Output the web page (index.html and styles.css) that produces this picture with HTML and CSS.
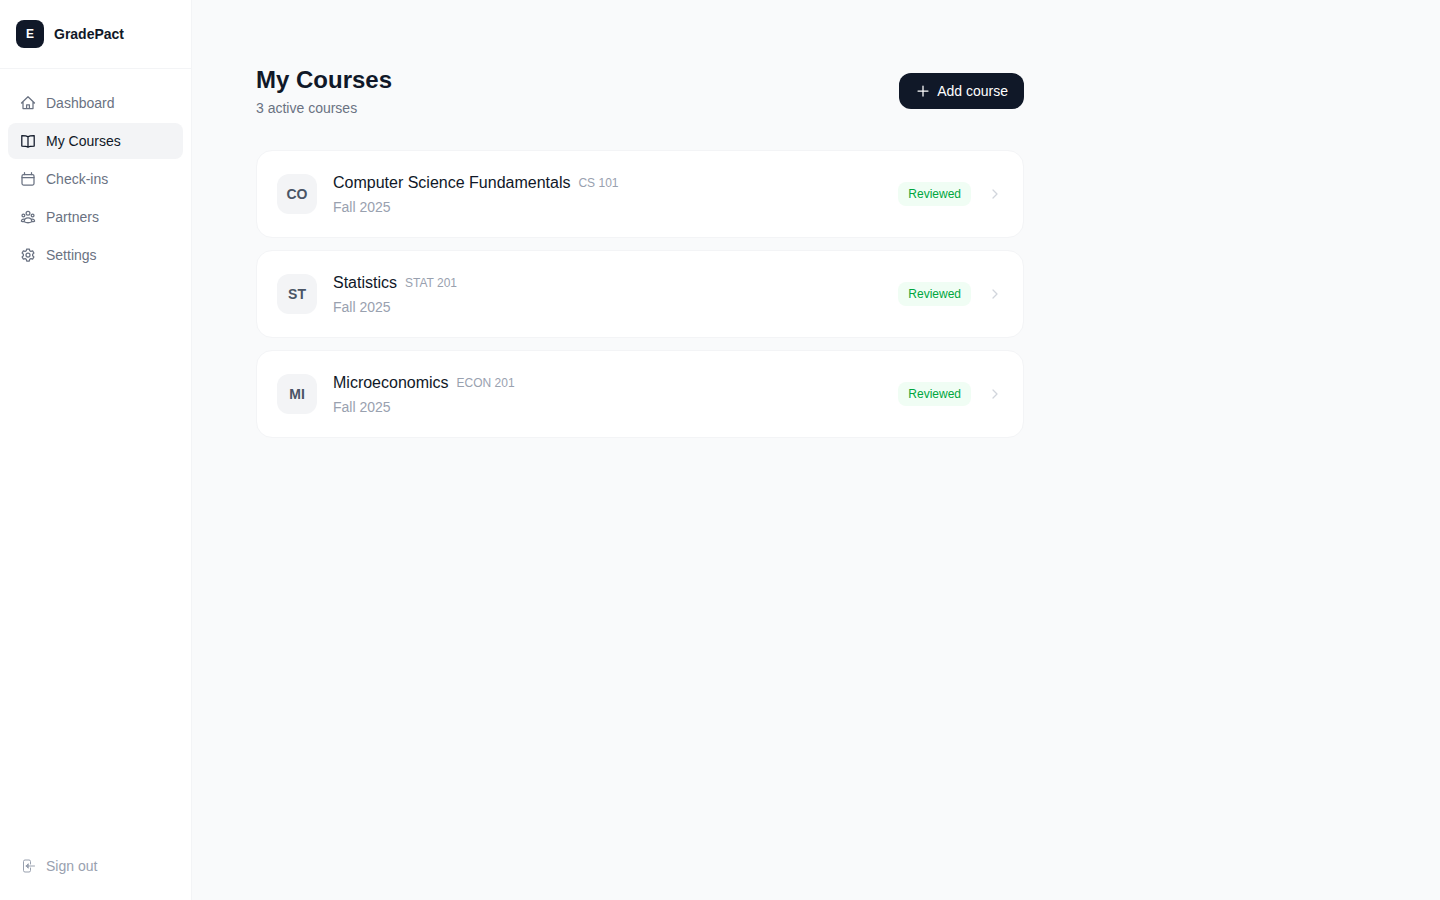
FILE: index.html
```html
<!DOCTYPE html>
<html lang="en">
<head>
    <meta charset="UTF-8">
    <meta name="viewport" content="width=device-width, initial-scale=1.0">
    <title>GradePact</title>
    <link rel="stylesheet" href="styles.css">
</head>
<body>

    <!-- Sidebar -->
    <aside class="sidebar">
        <div class="brand">
            <span class="brand-logo">E</span>
            <span class="brand-name">GradePact</span>
        </div>

        <nav class="nav">
            <a href="#" class="nav-link">
                <svg class="icon" viewBox="0 0 16 16"><path d="M1.500 8 8 1.700 14.500 8M3 6.800v6.700h10V6.800M6.600 13.500V9.800h2.800v3.700"/></svg>
                Dashboard
            </a>
            <a href="#" class="nav-link active">
                <svg class="icon" viewBox="0 0 16 16"><path d="M8 3.800C6.800 2.800 5 2.500 1.800 2.500v10.500c3.200 0 5 .2 6.200 1.200 1.200-1 3-1.200 6.200-1.200V2.500C11 2.500 9.200 2.800 8 3.800zM8 3.800v10"/></svg>
                My Courses
            </a>
            <a href="#" class="nav-link">
                <svg class="icon" viewBox="0 0 16 16"><rect x="2" y="3.500" width="12" height="10.500" rx="1.500"/><path d="M2 6.500h12M4.500 1.700v1.800M11.500 1.700v1.800"/></svg>
                Check-ins
            </a>
            <a href="#" class="nav-link">
                <svg class="icon" viewBox="0 0 16 16"><circle cx="8" cy="4.300" r="1.900"/><circle cx="3.400" cy="6.500" r="1.400"/><circle cx="12.600" cy="6.500" r="1.400"/><path d="M4.200 12.800c0-2.500 1.500-4 3.800-4s3.800 1.500 3.800 4c-2.400 1.200-5.200 1.200-7.600 0zM4.700 10.200c-2-.5-3.300.6-3.300 2.100.8.400 1.700.5 2.700.4M11.300 10.200c2-.5 3.300.6 3.300 2.100-.8.400-1.700.5-2.700.4"/></svg>
                Partners
            </a>
            <a href="#" class="nav-link">
                <svg class="icon" viewBox="0 0 16 16"><path d="M6.700 2h2.600l.4 1.700 1.200.7 1.700-.6 1.300 2.300-1.300 1.200v1.400l1.300 1.200-1.300 2.300-1.700-.6-1.200.7L9.300 14H6.700l-.4-1.700-1.200-.7-1.700.6-1.300-2.300 1.300-1.200V7.300L2.100 6.100l1.300-2.300 1.700.6 1.200-.7z"/><circle cx="8" cy="8" r="2"/></svg>
                Settings
            </a>
        </nav>

        <div class="sidebar-footer">
            <button type="button" class="nav-link sign-out">
                <svg class="icon" viewBox="0 0 16 16"><path d="M10.500 6V3.500A1.500 1.500 0 0 0 9 2H5a1.500 1.500 0 0 0-1.500 1.500v9A1.500 1.500 0 0 0 5 14h4a1.500 1.500 0 0 0 1.500-1.500V10"/><path class="arrow" d="M14.500 8H6M8 6 6 8l2 2z"/></svg>
                Sign out
            </button>
        </div>
    </aside>

    <!-- Courses -->
    <main class="content">
        <header class="page-header">
            <div>
                <h1>My Courses</h1>
                <p class="subtitle">3 active courses</p>
            </div>
            <button type="button" class="add-btn">
                <svg class="icon" viewBox="0 0 16 16"><path d="M8 3v10M3 8h10"/></svg>
                Add course
            </button>
        </header>

        <div class="course-list">
            <a href="#" class="course-card">
                <span class="course-avatar">CO</span>
                <div class="course-info">
                    <div class="course-title">
                        <h2>Computer Science Fundamentals</h2>
                        <span class="course-code">CS 101</span>
                    </div>
                    <p class="course-term">Fall 2025</p>
                </div>
                <span class="badge">Reviewed</span>
                <svg class="icon chevron" viewBox="0 0 16 16"><path d="m6 4 4 4-4 4"/></svg>
            </a>
            <a href="#" class="course-card">
                <span class="course-avatar">ST</span>
                <div class="course-info">
                    <div class="course-title">
                        <h2>Statistics</h2>
                        <span class="course-code">STAT 201</span>
                    </div>
                    <p class="course-term">Fall 2025</p>
                </div>
                <span class="badge">Reviewed</span>
                <svg class="icon chevron" viewBox="0 0 16 16"><path d="m6 4 4 4-4 4"/></svg>
            </a>
            <a href="#" class="course-card">
                <span class="course-avatar">MI</span>
                <div class="course-info">
                    <div class="course-title">
                        <h2>Microeconomics</h2>
                        <span class="course-code">ECON 201</span>
                    </div>
                    <p class="course-term">Fall 2025</p>
                </div>
                <span class="badge">Reviewed</span>
                <svg class="icon chevron" viewBox="0 0 16 16"><path d="m6 4 4 4-4 4"/></svg>
            </a>
        </div>
    </main>

</body>
</html>
```
FILE: styles.css
```css
* {
    box-sizing: border-box;
}

body {
    margin: 0;
    display: flex;
    min-height: 100vh;
    font-family: "Liberation Sans", Arial, sans-serif;
    font-size: 14px;
    line-height: 20px;
    color: #101828;
    background-color: #f9fafb;
}

h1, h2, p {
    margin: 0;
}

a {
    color: inherit;
    text-decoration: none;
}

button {
    font: inherit;
    border: none;
    cursor: pointer;
}

.icon {
    width: 16px;
    height: 16px;
    flex-shrink: 0;
    fill: none;
    stroke: currentColor;
    stroke-width: 1.25;
    stroke-linecap: round;
    stroke-linejoin: round;
}

/* Sidebar */
.sidebar {
    display: flex;
    flex-direction: column;
    width: 192px;
    flex-shrink: 0;
    background: #fff;
    border-right: 1px solid #f3f4f6;
}

.brand {
    display: flex;
    align-items: center;
    gap: 10px;
    padding: 20px 16px;
    border-bottom: 1px solid #f3f4f6;
}

.brand-logo {
    display: flex;
    align-items: center;
    justify-content: center;
    width: 28px;
    height: 28px;
    border-radius: 8px;
    background: #101828;
    color: #fff;
    font-size: 12px;
    font-weight: bold;
}

.brand-name {
    font-weight: bold;
}

.nav {
    display: flex;
    flex-direction: column;
    flex: 1;
    gap: 2px;
    padding: 16px 8px;
}

.nav-link {
    display: flex;
    align-items: center;
    gap: 10px;
    padding: 8px 12px;
    border-radius: 8px;
    color: #6a7282;
}

.nav-link:hover,
.nav-link.active {
    background: #f3f4f6;
    color: #101828;
}

.sidebar-footer {
    padding: 16px 8px;
}

.sign-out {
    width: 100%;
    background: none;
    color: #99a1af;
}

.sign-out .icon {
    stroke-width: 1;
}

.arrow {
    fill: currentColor;
}

/* Main content */
.content {
    flex: 1;
    max-width: 896px;
    padding: 64px;
}

.page-header {
    display: flex;
    align-items: center;
    justify-content: space-between;
    margin-bottom: 32px;
}

h1 {
    font-size: 24px;
    line-height: 32px;
}

.subtitle {
    margin-top: 2px;
    color: #6a7282;
}

.add-btn {
    display: flex;
    align-items: center;
    gap: 6px;
    padding: 8px 16px;
    border-radius: 12px;
    background: #101828;
    color: #fff;
}

/* Course cards */
.course-list {
    display: flex;
    flex-direction: column;
    gap: 12px;
}

.course-card {
    display: flex;
    align-items: center;
    gap: 16px;
    padding: 20px;
    background: #fff;
    border: 1px solid #f3f4f6;
    border-radius: 16px;
}

.course-avatar {
    display: flex;
    align-items: center;
    justify-content: center;
    width: 40px;
    height: 40px;
    border-radius: 12px;
    background: #f3f4f6;
    color: #4a5565;
    font-weight: bold;
}

.course-info {
    flex: 1;
}

.course-title {
    display: flex;
    align-items: center;
    gap: 8px;
}

.course-title h2 {
    font-size: 16px;
    font-weight: normal;
    line-height: 24px;
}

.course-code {
    font-size: 12px;
    line-height: 16px;
    color: #99a1af;
}

.course-term {
    margin-top: 2px;
    color: #99a1af;
}

.badge {
    padding: 4px 10px;
    border-radius: 8px;
    background: #f0fdf4;
    color: #00a63e;
    font-size: 12px;
    line-height: 16px;
}

.chevron {
    color: #d1d5dc;
}
```
